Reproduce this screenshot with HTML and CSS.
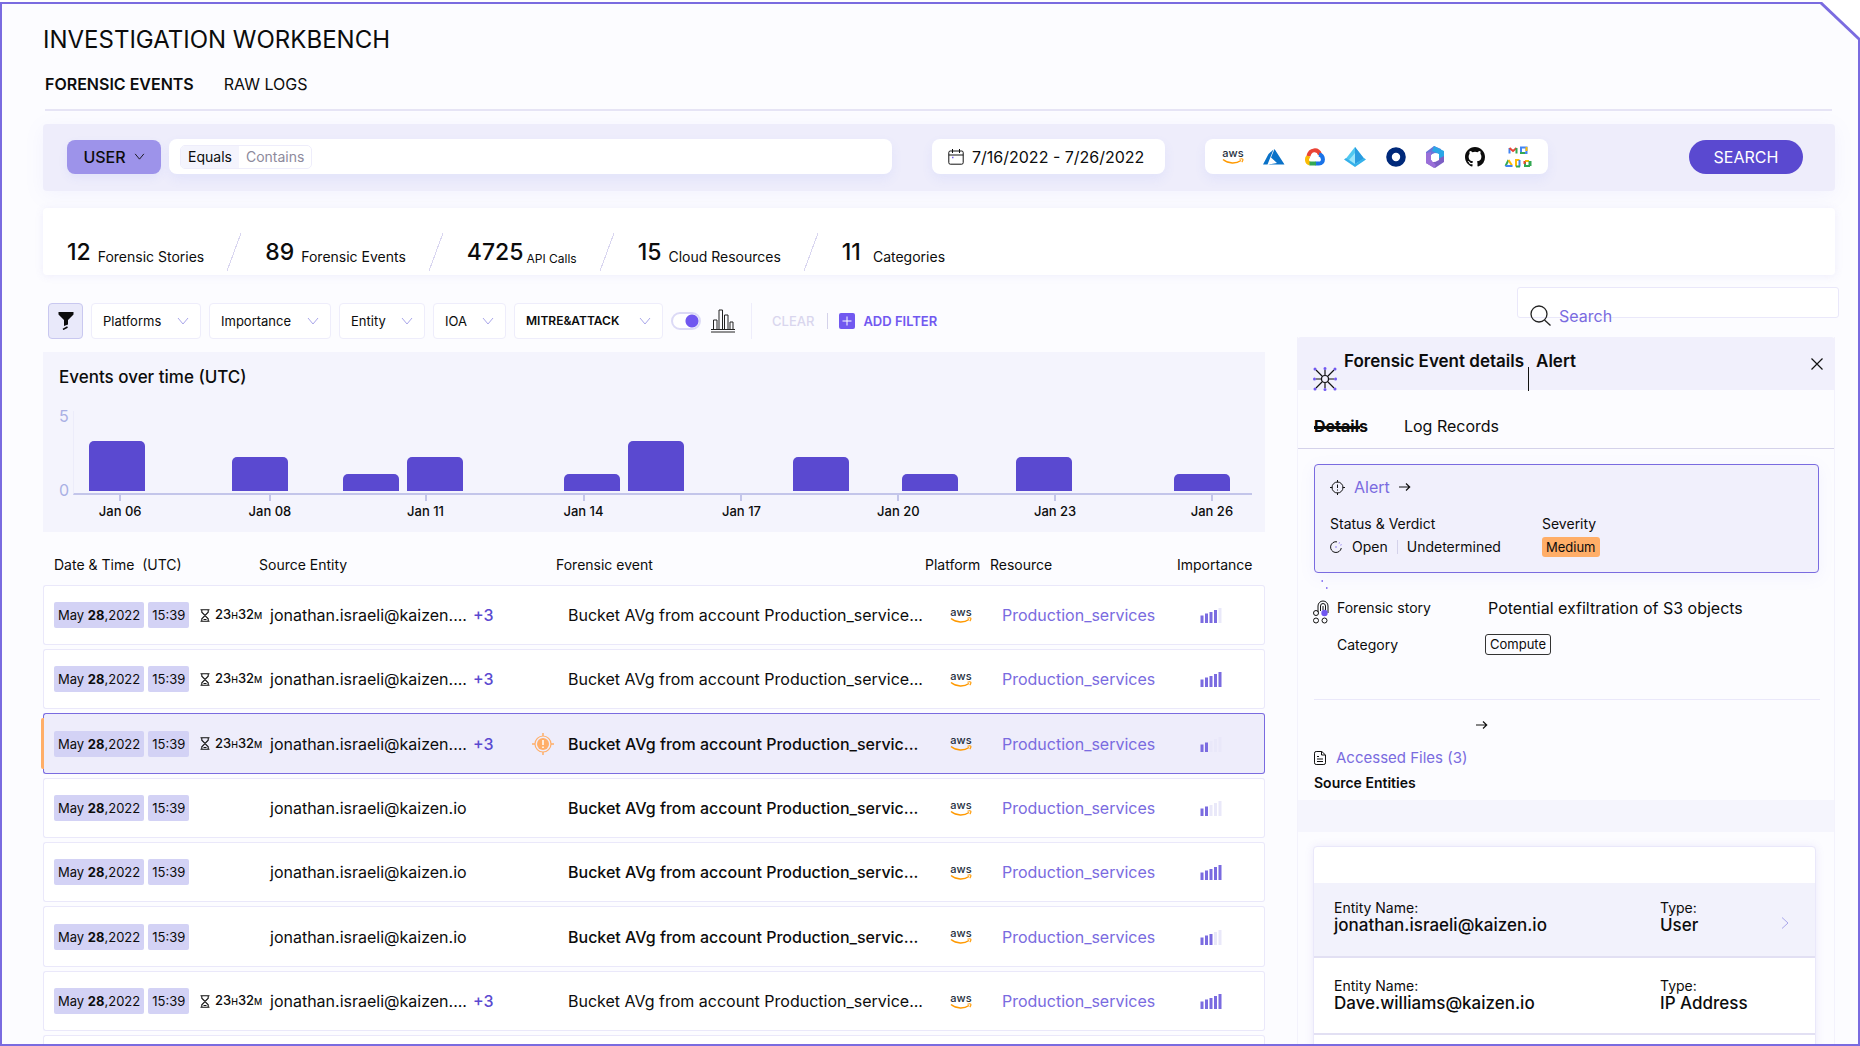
FILE: index.html
```html
<!DOCTYPE html>
<html lang="en">
<head>
    <meta charset="UTF-8">
    <meta name="viewport" content="width=device-width, initial-scale=1.0">
    <title>Investigation Workbench</title>
    <link rel="stylesheet" href="styles.css">
</head>
<body>
    <!-- shared icons -->
    <svg class="sprite" aria-hidden="true">
        <symbol id="chevron" viewBox="0 0 12 8"><path d="M1 1l5 6 5-6" fill="none" stroke="currentColor"/></symbol>
        <symbol id="aws" viewBox="0 0 22 17">
            <text x="11" y="9" text-anchor="middle" font-size="11" font-weight="500" fill="#252f3e">aws</text>
            <path d="M1 11.5c5.500 4.500 13 4.500 18 1" fill="none" stroke="#f90" stroke-width="1.500"/>
            <path d="M17.500 11.200c1.500-.500 3-.400 3.300 0 .300.500-.200 2-1 3" fill="none" stroke="#f90" stroke-width="1.100"/>
        </symbol>
        <symbol id="hourglass" viewBox="0 0 10 13"><path d="M.5.7h9M.5 12.300h9M1.800.7v2.500L5 6.500l3.200-3.300V.7M1.800 12.300V9.800L5 6.500l3.200 3.300v2.500M3.500 10.500h3" fill="none" stroke="#111" stroke-width="1.100"/></symbol>
        <symbol id="arrow" viewBox="0 0 12 10"><path d="M0 5h10.500M7 1.500L10.700 5 7 8.500" fill="none" stroke="#111" stroke-width="1.200"/></symbol>
        <symbol id="sig2" viewBox="0 0 22 18"><path d="M2 17V9.500M6.500 17V7.500" class="sig-on"/><path d="M11 17V6M15.500 17V4M20 17V2" class="sig-off"/></symbol>
        <symbol id="sig3" viewBox="0 0 22 18"><path d="M2 17V9.500M6.500 17V7.500M11 17V6" class="sig-on"/><path d="M15.500 17V4M20 17V2" class="sig-off"/></symbol>
        <symbol id="sig4" viewBox="0 0 22 18"><path d="M2 17V9.500M6.500 17V7.500M11 17V6M15.500 17V4" class="sig-on"/><path d="M20 17V2" class="sig-off"/></symbol>
        <symbol id="sig5" viewBox="0 0 22 18"><path d="M2 17V9.500M6.500 17V7.500M11 17V6M15.500 17V4M20 17V2" class="sig-on"/></symbol>
    </svg>

    <div class="frame">
        <main class="workbench">
            <h1>INVESTIGATION WORKBENCH</h1>
            <nav class="main-tabs">
                <a href="#" class="active">FORENSIC EVENTS</a>
                <a href="#">RAW LOGS</a>
            </nav>

            <form class="query-bar">
                <button type="button" class="user-btn">USER <svg width="11" height="7"><use href="#chevron"/></svg></button>
                <div class="query">
                    <div class="segment">
                        <button type="button" class="on">Equals</button>
                        <button type="button">Contains</button>
                    </div>
                    <input type="text" aria-label="User query">
                </div>
                <button type="button" class="date-range">
                    <svg width="16" height="16" viewBox="0 0 16 16" fill="none" stroke="#111"><rect x=".8" y="2" width="14.400" height="13.200" rx="1.500"/><path d="M.8 6h14.400M4.500 0v4M11.500 0v4"/><path d="M4 8.500h1.500" stroke="#7158f0" stroke-width="1.500"/></svg>
                    7/16/2022 - 7/26/2022
                </button>
                <div class="platforms">
                    <svg width="22" height="17"><use href="#aws"/></svg>
                    <svg width="22" height="18" viewBox="0 0 22 18"><path d="M10.500 1.500L5.500 6 0 16.500h4.500zM11.500 1L8 9.500l6 5.500-9 1.500h16.500z" fill="#0a72c8"/></svg>
                    <svg width="20" height="18" viewBox="0 0 20 18" fill="none" stroke-width="4"><path d="M5 15.500a3.800 3.800 0 0 1-.500-7.300" stroke="#fbbc05"/><path d="M3.500 8C5 1 13 .500 15 6.500" stroke="#ea4335"/><path d="M14 6.500c5 1 5.500 9 0 9h-3.500" stroke="#1a73e8"/><path d="M4.500 15.500h6.500" stroke="#34a853"/></svg>
                    <svg width="22" height="20" viewBox="0 0 22 20"><path d="M11 0l9 11.500L11 17 2 11.500z" fill="#50c8f0"/><path d="M11 0v17l9-5.500z" fill="#2a9be0"/><path d="M11 6v11l-6-4z" fill="#9be6fb"/><path d="M0 12.500l2-1.500 9 6 9-6 2 1.500L11 20z" fill="#35b1ea"/></svg>
                    <svg width="20" height="20" viewBox="0 0 20 20"><circle cx="10" cy="10" r="7" fill="none" stroke="#00297a" stroke-width="5.600"/></svg>
                    <svg width="20" height="22" viewBox="0 0 20 22"><path d="M9 0l7 3v7l-3-3-6 1v8l-6 1V6z" fill="#6c74d8"/><path d="M9 0l10 5v7l-5 2V8L7 5z" fill="#2ba6e6"/><path d="M19 10v6l-9 6-9-5 8-1 4-3z" fill="#7c5fc4"/><path d="M1 7l5-1v8l5 5-2 3-8-5z" fill="#9a6fd8"/><path d="M10 7l4 2v5l-4 2-4-2V9z" fill="#fff"/></svg>
                    <svg width="20" height="20" viewBox="0 0 16 16"><path d="M8 0C3.580 0 0 3.580 0 8c0 3.540 2.290 6.530 5.470 7.590.4.070.55-.17.55-.38 0-.19-.01-.82-.01-1.490-2.010.37-2.530-.49-2.690-.94-.09-.23-.48-.94-.82-1.130-.28-.15-.68-.52-.01-.53.63-.01 1.080.58 1.230.82.72 1.210 1.870.87 2.330.66.07-.52.28-.87.51-1.070-1.780-.2-3.640-.89-3.640-3.950 0-.87.31-1.590.82-2.150-.08-.2-.36-1.020.08-2.120 0 0 .67-.21 2.200.82a7.600 7.600 0 0 1 4 0c1.530-1.040 2.200-.82 2.200-.82.44 1.100.16 1.920.08 2.120.51.56.82 1.270.82 2.150 0 3.070-1.870 3.750-3.650 3.950.29.25.54.73.54 1.480 0 1.070-.01 1.930-.01 2.200 0 .21.15.46.55.38A8 8 0 0 0 16 8c0-4.420-3.580-8-8-8z" fill="#0c0c0c"/></svg>
                    <svg width="28" height="22" viewBox="0 0 28 22" fill="none" stroke-width="2">
                        <path d="M5.500 7.500V2" stroke="#4285f4"/><path d="M5.500 2l3.500 3 3.500-3" stroke="#ea4335"/><path d="M12.500 2v5.500" stroke="#34a853"/>
                        <rect x="17" y="1.500" width="5.500" height="5.500" stroke="#4285f4"/><path d="M16 7h5" stroke="#34a853"/><path d="M22.500 1v4" stroke="#fbbc05"/>
                        <path d="M4.500 14L1.500 20" stroke="#34a853"/><path d="M4.500 14l3.500 5.500" stroke="#fbbc05"/><path d="M1.500 20h7" stroke="#4285f4"/>
                        <path d="M12 20.500V14h3.500" stroke="#fbbc05"/><path d="M15.500 14v6.500" stroke="#4285f4"/><path d="M12 20.500h4" stroke="#34a853"/>
                        <path d="M21 15v5h5" stroke="#34a853"/><path d="M21 15h4" stroke="#fbbc05"/><path d="M20.500 15v3" stroke="#ea4335"/><path d="M26 15v5" stroke="#34a853" stroke-width="3"/>
                    </svg>
                </div>
                <button type="submit" class="search-btn">SEARCH</button>
            </form>

            <section class="stats">
                <div class="stat"><b>12</b><span>Forensic Stories</span></div>
                <i class="slash"></i>
                <div class="stat"><b>89</b><span>Forensic Events</span></div>
                <i class="slash"></i>
                <div class="stat low"><b>4725</b><span>API Calls</span></div>
                <i class="slash"></i>
                <div class="stat"><b>15</b><span>Cloud Resources</span></div>
                <i class="slash"></i>
                <div class="stat wide"><b>11</b><span>Categories</span></div>
            </section>

            <div class="columns">
                <section class="events">
                    <div class="filters">
                        <button type="button" class="filter-btn" aria-label="Filters"><svg width="16" height="18" viewBox="0 0 16 18"><path d="M.5 0h15v2.500L10 8v4.500L6 14V8L.5 2.500z" fill="#0c0c0c"/><path d="M5 17.500l4.500-2.500" stroke="#0c0c0c" stroke-width="1.500"/></svg></button>
                        <label class="pick"><select aria-label="Platforms"><option>Platforms</option></select><svg width="12" height="8"><use href="#chevron"/></svg></label>
                        <label class="pick"><select aria-label="Importance"><option>Importance</option></select><svg width="12" height="8"><use href="#chevron"/></svg></label>
                        <label class="pick"><select aria-label="Entity"><option>Entity</option></select><svg width="12" height="8"><use href="#chevron"/></svg></label>
                        <label class="pick"><select aria-label="IOA"><option>IOA</option></select><svg width="12" height="8"><use href="#chevron"/></svg></label>
                        <label class="pick strong"><select aria-label="MITRE and ATTACK"><option>MITRE&amp;ATTACK</option></select><svg width="12" height="8"><use href="#chevron"/></svg></label>
                        <input type="checkbox" class="toggle" aria-label="Show chart" checked>
                        <svg class="chart-icon" width="24" height="24" viewBox="0 0 24 24" fill="none" stroke="#222"><path d="M2.500 20v-9h3.500v9M8 20V1h3.500v19M13.500 20V6H17v14M19 20v-7h3v7M0 20.500h24M0 23h24"/></svg>
                        <span class="rule tall"></span>
                        <button type="button" class="clear">CLEAR</button>
                        <span class="rule"></span>
                        <button type="button" class="add"><svg width="16" height="16" viewBox="0 0 16 16"><rect width="16" height="16" rx="2" fill="#7158f0"/><path d="M8 3.500v9M3.500 8h9" stroke="#fff"/></svg>ADD FILTER</button>
                    </div>

                    <div class="chart">
                        <h2>Events over time (UTC)</h2>
                        <div class="chart-grid">
                            <div class="y-axis"><span>5</span><span>0</span></div>
                            <div class="plot">
                                <div class="bar" style="--x:1.3%;--v:3"></div>
                                <div class="bar" style="--x:13.4%;--v:2"></div>
                                <div class="bar" style="--x:22.8%;--v:1"></div>
                                <div class="bar" style="--x:28.3%;--v:2"></div>
                                <div class="bar" style="--x:41.6%;--v:1"></div>
                                <div class="bar" style="--x:47%;--v:3"></div>
                                <div class="bar" style="--x:61%;--v:2"></div>
                                <div class="bar" style="--x:70.3%;--v:1"></div>
                                <div class="bar" style="--x:80%;--v:2"></div>
                                <div class="bar" style="--x:93.4%;--v:1"></div>
                            </div>
                            <div class="x-axis">
                                <span style="--x:4%">Jan 06</span>
                                <span style="--x:16.7%">Jan 08</span>
                                <span style="--x:29.9%">Jan 11</span>
                                <span style="--x:43.3%">Jan 14</span>
                                <span style="--x:56.7%">Jan 17</span>
                                <span style="--x:70%">Jan 20</span>
                                <span style="--x:83.3%">Jan 23</span>
                                <span style="--x:96.6%">Jan 26</span>
                            </div>
                        </div>
                    </div>

                    <table>
                        <colgroup><col class="c-date"><col class="c-source"><col><col class="c-platform"><col class="c-resource"><col class="c-level"></colgroup>
                        <thead>
                            <tr><th>Date &amp; Time &nbsp;(UTC)</th><th>Source Entity</th><th>Forensic event</th><th>Platform</th><th>Resource</th><th>Importance</th></tr>
                        </thead>
                        <tbody>
                            <tr>
                                <td><div class="cell"><span class="chip">May <b>28</b>,2022</span><span class="chip">15:39</span></div></td>
                                <td><div class="cell"><span class="dur"><svg width="10" height="13"><use href="#hourglass"/></svg>23<small>H</small>32<small>M</small></span><span>jonathan.israeli@kaizen....</span><a href="#" class="more">+3</a></div></td>
                                <td><div class="cell"><span class="mark"></span><span>Bucket AVg from account Production_service...</span></div></td>
                                <td><svg width="22" height="17"><use href="#aws"/></svg></td>
                                <td><a href="#">Production_services</a></td>
                                <td><svg width="22" height="18"><use href="#sig4"/></svg></td>
                            </tr>
                            <tr>
                                <td><div class="cell"><span class="chip">May <b>28</b>,2022</span><span class="chip">15:39</span></div></td>
                                <td><div class="cell"><span class="dur"><svg width="10" height="13"><use href="#hourglass"/></svg>23<small>H</small>32<small>M</small></span><span>jonathan.israeli@kaizen....</span><a href="#" class="more">+3</a></div></td>
                                <td><div class="cell"><span class="mark"></span><span>Bucket AVg from account Production_service...</span></div></td>
                                <td><svg width="22" height="17"><use href="#aws"/></svg></td>
                                <td><a href="#">Production_services</a></td>
                                <td><svg width="22" height="18"><use href="#sig5"/></svg></td>
                            </tr>
                            <tr class="selected unread">
                                <td><div class="cell"><span class="chip">May <b>28</b>,2022</span><span class="chip">15:39</span></div></td>
                                <td><div class="cell"><span class="dur"><svg width="10" height="13"><use href="#hourglass"/></svg>23<small>H</small>32<small>M</small></span><span>jonathan.israeli@kaizen....</span><a href="#" class="more">+3</a></div></td>
                                <td><div class="cell"><span class="mark"><svg width="22" height="22" viewBox="0 0 22 22" fill="none" stroke="#ffae68"><circle cx="11" cy="11" r="8" stroke-width="1.200"/><circle cx="11" cy="11" r="6" fill="#ffae68" stroke="none"/><path d="M11 0v3M11 19v3M0 11h3M19 11h3" stroke-width="1.500"/><path d="M11 7v5M11 13.500v1.500" stroke="#fff" stroke-width="1.500"/></svg></span><span>Bucket AVg from account Production_servic...</span></div></td>
                                <td><svg width="22" height="17"><use href="#aws"/></svg></td>
                                <td><a href="#">Production_services</a></td>
                                <td><svg width="22" height="18"><use href="#sig2"/></svg></td>
                            </tr>
                            <tr class="unread">
                                <td><div class="cell"><span class="chip">May <b>28</b>,2022</span><span class="chip">15:39</span></div></td>
                                <td><div class="cell"><span class="dur"></span><span>jonathan.israeli@kaizen.io</span></div></td>
                                <td><div class="cell"><span class="mark"></span><span>Bucket AVg from account Production_servic...</span></div></td>
                                <td><svg width="22" height="17"><use href="#aws"/></svg></td>
                                <td><a href="#">Production_services</a></td>
                                <td><svg width="22" height="18"><use href="#sig2"/></svg></td>
                            </tr>
                            <tr class="unread">
                                <td><div class="cell"><span class="chip">May <b>28</b>,2022</span><span class="chip">15:39</span></div></td>
                                <td><div class="cell"><span class="dur"></span><span>jonathan.israeli@kaizen.io</span></div></td>
                                <td><div class="cell"><span class="mark"></span><span>Bucket AVg from account Production_servic...</span></div></td>
                                <td><svg width="22" height="17"><use href="#aws"/></svg></td>
                                <td><a href="#">Production_services</a></td>
                                <td><svg width="22" height="18"><use href="#sig5"/></svg></td>
                            </tr>
                            <tr class="unread">
                                <td><div class="cell"><span class="chip">May <b>28</b>,2022</span><span class="chip">15:39</span></div></td>
                                <td><div class="cell"><span class="dur"></span><span>jonathan.israeli@kaizen.io</span></div></td>
                                <td><div class="cell"><span class="mark"></span><span>Bucket AVg from account Production_servic...</span></div></td>
                                <td><svg width="22" height="17"><use href="#aws"/></svg></td>
                                <td><a href="#">Production_services</a></td>
                                <td><svg width="22" height="18"><use href="#sig3"/></svg></td>
                            </tr>
                            <tr>
                                <td><div class="cell"><span class="chip">May <b>28</b>,2022</span><span class="chip">15:39</span></div></td>
                                <td><div class="cell"><span class="dur"><svg width="10" height="13"><use href="#hourglass"/></svg>23<small>H</small>32<small>M</small></span><span>jonathan.israeli@kaizen....</span><a href="#" class="more">+3</a></div></td>
                                <td><div class="cell"><span class="mark"></span><span>Bucket AVg from account Production_service...</span></div></td>
                                <td><svg width="22" height="17"><use href="#aws"/></svg></td>
                                <td><a href="#">Production_services</a></td>
                                <td><svg width="22" height="18"><use href="#sig5"/></svg></td>
                            </tr>
                            <tr><td></td><td></td><td></td><td></td><td></td><td></td></tr>
                        </tbody>
                    </table>
                </section>

                <aside class="side">
                    <label class="find">
                        <svg width="21" height="21" viewBox="0 0 21 21" fill="none" stroke="#222" stroke-width="1.300"><circle cx="9" cy="9" r="8"/><path d="M14.500 15l6 5.500"/></svg>
                        <input type="search" placeholder="Search" aria-label="Search">
                    </label>

                    <div class="panel">
                        <header class="panel-head">
                            <svg width="24" height="24" viewBox="0 0 24 24"><path d="M12 3v5M12 16v5M3 12h5M16 12h5M3 3l6 6M15 15l6 6M21 3l-6 6M9 15l-6 6" stroke="#111" stroke-width="1.200"/><circle cx="12" cy="12" r="3.500" fill="none" stroke="#111" stroke-width="1.200"/><path d="M12 1.500h.01M12 22.500h.01M1.500 12h.01M22.500 12h.01M2 2h.01M22 2h.01M2 22h.01M22 22h.01" stroke="#7158f0" stroke-width="3" stroke-linecap="round"/></svg>
                            <h2>Forensic Event details</h2>
                            <span class="sep"></span>
                            <h2>Alert</h2>
                            <button type="button" class="close" aria-label="Close"><svg width="12" height="12" viewBox="0 0 12 12"><path d="M.5.5l11 11M11.500.5l-11 11" stroke="#111" stroke-width="1.200"/></svg></button>
                        </header>
                        <nav class="panel-tabs">
                            <a href="#" class="active">Details</a>
                            <a href="#">Log Records</a>
                        </nav>

                        <section class="alert-card">
                            <div class="alert-title">
                                <svg width="15" height="15" viewBox="0 0 15 15" fill="none" stroke="#111"><circle cx="7.500" cy="7.500" r="5.500"/><path d="M7.500 0v2.500M7.500 12.500V15M0 7.500h2.500M12.500 7.500H15M7.500 4.500V8M7.500 9.500v1"/></svg>
                                <a href="#">Alert</a>
                                <svg width="12" height="10"><use href="#arrow"/></svg>
                            </div>
                            <div class="alert-facts">
                                <div>
                                    <div class="fact-label">Status &amp; Verdict</div>
                                    <div class="status">
                                        <svg width="12" height="12" viewBox="0 0 12 12" fill="none" stroke="#111"><path d="M7 .8A5.400 5.400 0 1 0 11.300 7"/><path d="M9 1.700l.5.5M10.800 3.600l.3.600M5.500 6h1" stroke="#7158f0" stroke-width="1.300"/></svg>
                                        <span>Open</span><i></i><span>Undetermined</span>
                                    </div>
                                </div>
                                <div>
                                    <div class="fact-label">Severity</div>
                                    <span class="severity">Medium</span>
                                </div>
                            </div>
                        </section>

                        <div class="story">
                            <svg width="16" height="44" viewBox="0 0 16 44" fill="none" stroke="#111"><path d="M8.500 1h1.500M13 8h1.500" stroke="#7158f0" stroke-width="1.500"/><path d="M5 32v-6a4.500 4.500 0 0 1 10 0v7M7.500 31v-5a2 2 0 0 1 5 0v6M10 30v-4"/><circle cx="3" cy="33" r="2.500"/><circle cx="3" cy="40.500" r="2.500"/><circle cx="11.500" cy="40.500" r="2.500"/><circle cx="11.500" cy="33" r="3.200" fill="#7158f0" stroke="none"/></svg>
                            <span class="key">Forensic story</span>
                            <span>Potential exfiltration of S3 objects</span>
                        </div>
                        <div class="category">
                            <span class="key">Category</span>
                            <span class="tag">Compute</span>
                        </div>

                        <div class="files">
                            <svg class="files-arrow" width="12" height="16"><use href="#arrow"/></svg>
                            <div class="files-link">
                                <svg width="12" height="14" viewBox="0 0 12 14" fill="none" stroke="#111"><path d="M.5 2.200A1.700 1.700 0 0 1 2.200.5h5.600l3.700 3.500v7.800a1.700 1.700 0 0 1-1.700 1.700H2.200a1.700 1.700 0 0 1-1.700-1.700zM7.500.5V4h4M3 5.500h2M3 8h6M3 10.500h6"/></svg>
                                <a href="#">Accessed Files (3)</a>
                            </div>
                        </div>
                        <h3>Source Entities</h3>
                        <div class="band"></div>

                        <div class="entities">
                            <div class="entity current">
                                <div><span>Entity Name:</span><b>jonathan.israeli@kaizen.io</b></div>
                                <div><span>Type:</span><b>User</b></div>
                                <svg width="8" height="12" viewBox="0 0 8 12"><path d="M1 .5L7 6l-6 5.500" fill="none" stroke="#a9a6ea"/></svg>
                            </div>
                            <div class="entity">
                                <div><span>Entity Name:</span><b>Dave.williams@kaizen.io</b></div>
                                <div><span>Type:</span><b>IP Address</b></div>
                            </div>
                            <div class="entity"></div>
                        </div>
                    </div>
                </aside>
            </div>
        </main>
    </div>
</body>
</html>
```
FILE: styles.css
```css
* {
    box-sizing: border-box;
}

body {
    margin: 0;
    background: #fff;
    color: #0c0c0c;
    font: 16px/20px Inter, "Liberation Sans", sans-serif;
}

h1, h2, h3 {
    margin: 0;
}

a {
    color: #7a6be0;
    text-decoration: none;
}

button, input, select {
    font: inherit;
    color: inherit;
}

button {
    border: none;
    background: none;
    padding: 0;
    cursor: pointer;
}

svg {
    flex: none;
}

.sprite {
    display: none;
}

.sig-on, .sig-off {
    stroke-width: 3;
    stroke: #7a6be0;
}

.sig-off {
    stroke: #e9e8f9;
}

/* purple outline with the top right corner cut off */
.frame {
    height: 100vh;
    padding: 2px;
    border-top: 2px solid #fff;
    background: #7a6be0 padding-box;
    clip-path: polygon(0 0, calc(100% - 40px) 0, 100% 38px, 100% 100%, 0 100%);
}

.workbench {
    height: 100%;
    padding: 21px 23px 0 41px;
    overflow: hidden;
    background: #fcfcff;
    clip-path: polygon(0 0, calc(100% - 38px) 0, 100% 36px, 100% 100%, 0 100%);
}

h1 {
    font-size: 24px;
    font-weight: 400;
    line-height: 30px;
}

.main-tabs {
    display: flex;
    gap: 30px;
    margin: 19px 3px 0 2px;
    padding-bottom: 15px;
    border-bottom: 2px solid #e6e4f5;
}

.main-tabs a {
    color: #0c0c0c;
}

.main-tabs .active {
    font-weight: 600;
}

/* query bar */
.query-bar {
    display: flex;
    align-items: center;
    height: 67px;
    margin-top: 13px;
    padding: 0 32px 2px 24px;
    border-radius: 4px;
    background: #eeedfb;
    box-shadow: 0 4px 20px rgba(122, 130, 240, 0.08);
}

.user-btn {
    display: flex;
    align-items: center;
    justify-content: center;
    gap: 8px;
    width: 94px;
    height: 34px;
    margin-right: 8px;
    border-radius: 8px;
    background: #9d93ea;
    font-weight: 500;
    box-shadow: 0 4px 10px rgba(90, 110, 240, 0.08);
}

.query, .date-range, .platforms {
    display: flex;
    align-items: center;
    height: 35px;
    border-radius: 8px;
    background: #fff;
    box-shadow: 0 5px 12px rgba(90, 120, 240, 0.08);
}

.query {
    flex: 1;
    min-width: 0;
    padding: 0 11px;
}

.query input {
    flex: 1;
    min-width: 0;
    border: none;
    outline: none;
    background: none;
}

.segment {
    display: flex;
    height: 24px;
    border: 1px solid #eeedfb;
    border-radius: 5px;
    overflow: hidden;
    font-size: 14px;
}

.segment button {
    padding: 0 7px;
    color: #8d8a9c;
}

.segment .on {
    background: #f4f4fd;
    color: #0c0c0c;
}

.date-range {
    gap: 8px;
    width: 233px;
    margin: 0 40px;
    padding: 0 16px;
    white-space: nowrap;
}

.platforms {
    justify-content: space-between;
    width: 343px;
    margin-right: 141px;
    padding: 0 16px 0 17px;
}

.search-btn {
    width: 114px;
    height: 34px;
    border-radius: 17px;
    background: #5a49d0;
    color: #fff;
}

/* totals */
.stats {
    display: flex;
    align-items: flex-end;
    height: 67px;
    margin-top: 17px;
    padding: 0 24px 4px;
    border-radius: 4px;
    background: #fff;
    box-shadow: 0 1px 8px rgba(120, 110, 220, 0.1);
}

.stat {
    display: flex;
    align-items: flex-end;
    gap: 7px;
}

.stat b {
    font-size: 23px;
    font-weight: 500;
    line-height: 38px;
}

.stat span {
    font-size: 14px;
    line-height: 28px;
}

.stat.low {
    gap: 3px;
}

.stat.low span {
    font-size: 12px;
    line-height: 24px;
}

.stat.wide {
    gap: 12px;
}

.slash {
    width: 14px;
    height: 38px;
    margin: 0 24px 0 23px;
    background: linear-gradient(to bottom right, transparent 48%, #d9d6f0 48%, #d9d6f0 52%, transparent 52%);
}

.columns {
    display: grid;
    grid-template-columns: minmax(0, 1fr) 538px;
    gap: 32px;
}

/* filters */
.filters {
    display: flex;
    align-items: center;
    gap: 8px;
    height: 36px;
    margin: 28px 0 13px 5px;
    font-size: 13px;
}

.filter-btn {
    display: flex;
    align-items: center;
    justify-content: center;
    width: 35px;
    height: 36px;
    border: 1px solid #c9c8f0;
    border-radius: 4px;
    background: #e9e9fa;
}

.pick {
    position: relative;
}

.pick select {
    height: 36px;
    padding: 0 38px 0 11px;
    border: 1px solid #eeedfb;
    border-radius: 4px;
    background: #fff;
    appearance: none;
}

.pick svg {
    position: absolute;
    top: 14px;
    right: 12px;
    color: #a9a6ea;
    pointer-events: none;
}

.pick.strong {
    font-size: 12px;
    font-weight: 600;
}

.pick.strong select {
    padding-right: 42px;
}

.toggle {
    width: 30px;
    height: 18px;
    margin: 0;
    border: 2px solid #dcdaf6;
    border-radius: 9px;
    background: radial-gradient(circle at 19px 7px, #7158f0 6px, #fff 7px);
    appearance: none;
}

.chart-icon {
    margin-left: 2px;
}

.rule {
    width: 1px;
    height: 16px;
    background: #d4d2ea;
}

.rule.tall {
    height: 36px;
    margin: 0 12px 0 8px;
    background: #eeedfb;
}

.clear {
    margin-right: 5px;
    color: #d9d6ee;
    font-weight: 500;
}

.add {
    display: flex;
    align-items: center;
    gap: 8px;
    margin-left: 3px;
    color: #7158f0;
    font-weight: 600;
}

/* bar chart */
.chart {
    padding: 15px 13px 13px 16px;
    background: #f4f4fd;
}

.chart h2 {
    margin-bottom: 24px;
    font-size: 17px;
    font-weight: 500;
}

.chart-grid {
    display: grid;
    grid-template-columns: 14px 1fr;
    grid-template-rows: 84px auto;
}

.y-axis {
    display: flex;
    flex-direction: column;
    justify-content: space-between;
    color: #a9b0e4;
    line-height: 10px;
}

.plot, .x-axis {
    display: grid;
}

.plot {
    padding-bottom: 2px;
    border-left: 1px solid #ececfa;
    border-bottom: 2px solid #c3c5ea;
}

.bar {
    grid-area: 1 / 1;
    align-self: end;
    width: 56px;
    height: calc(var(--v) * 21%);
    margin-left: var(--x);
    border-radius: 5px 5px 0 0;
    background: #5a49d0;
}

.x-axis {
    grid-column: 2;
    font-size: 13px;
    font-weight: 500;
    line-height: 16px;
}

.x-axis span {
    grid-area: 1 / 1;
    width: 60px;
    margin-left: calc(var(--x) - 30px);
    text-align: center;
}

.x-axis span::before {
    content: '';
    display: block;
    width: 2px;
    height: 6px;
    margin: 0 auto 2px;
    background: #c3c5ea;
}

/* events table */
table {
    width: 100%;
    margin-top: 9px;
    border-spacing: 0 4px;
    table-layout: fixed;
}

.c-date {
    width: 157px;
}

.c-source {
    width: 319px;
}

.c-platform {
    width: 65px;
}

.c-resource {
    width: 175px;
}

.c-level {
    width: 100px;
}

th {
    height: 36px;
    padding: 4px 0 0;
    font-size: 14px;
    font-weight: 400;
    text-align: left;
    white-space: nowrap;
}

th:nth-child(1) {
    padding-left: 11px;
}

th:nth-child(2) {
    padding-left: 59px;
}

th:nth-child(3) {
    padding-left: 37px;
}

th:nth-child(6) {
    padding-left: 12px;
}

td {
    position: relative;
    height: 60px;
    padding: 0;
    border: solid #eae8fa;
    border-width: 1px 0;
    background: #fff;
    white-space: nowrap;
}

tr:nth-child(3n) td {
    height: 61px;
}

td:first-child {
    padding-left: 10px;
    border-left-width: 1px;
    border-radius: 3px 0 0 3px;
}

td:nth-child(3) {
    padding-left: 13px;
}

td:nth-child(4) {
    padding-left: 25px;
}

td:nth-child(5) {
    padding-left: 12px;
}

td:last-child {
    padding-left: 35px;
    border-right-width: 1px;
    border-radius: 0 3px 3px 0;
}

td > svg {
    display: block;
}

.cell {
    display: flex;
    align-items: center;
}

.chip {
    margin-right: 4px;
    padding: 0 4px;
    border-radius: 2px;
    background: #d3d2f5;
    font-size: 13px;
    line-height: 26px;
}

.dur {
    display: flex;
    flex: none;
    align-items: baseline;
    width: 70px;
    font-size: 13px;
    font-weight: 500;
}

.dur svg {
    align-self: center;
    margin-right: 5px;
}

.dur small {
    font-size: 9px;
}

.more {
    margin-left: 6px;
    color: #5a49d0;
    font-weight: 500;
}

.mark {
    flex: none;
    width: 36px;
}

.mark svg {
    display: block;
}

.unread td:nth-child(3) {
    font-weight: 500;
}

.selected td {
    border-color: #7a6be0;
    background: #eeedfb;
}

.selected td:first-child::before {
    content: '';
    position: absolute;
    top: 4px;
    bottom: 4px;
    left: -3px;
    width: 3px;
    border-radius: 2px 0 0 2px;
    background: #ffae68;
}

/* side column */
.find {
    display: flex;
    align-items: flex-start;
    gap: 8px;
    width: 322px;
    height: 31px;
    margin: 12px -4px 19px auto;
    padding: 17px 12px 0;
    border: 1px solid #eae8fa;
    border-radius: 3px;
    background: #fff;
}

.find input {
    flex: 1;
    height: 22px;
    padding: 0;
    border: none;
    outline: none;
    background: none;
}

.find input::placeholder {
    color: #7a6be0;
}

.panel {
    border: solid #f3f2fc;
    border-width: 0 1px;
}

.panel-head {
    display: flex;
    align-items: flex-start;
    height: 53px;
    margin: 0 -1px;
    padding: 0 12px 0 16px;
    border-radius: 4px 4px 0 0;
    background: #f1f0fc;
}

.panel-head > svg, .sep {
    margin-top: 30px;
}

.panel-head h2 {
    margin: 14px 0 0 7px;
    font-size: 17px;
    font-weight: 600;
}

.sep {
    width: 1px;
    height: 24px;
    margin-left: 4px;
    background: #111;
}

.close {
    margin: 17px 0 0 auto;
}

.panel-tabs {
    display: flex;
    gap: 36px;
    padding: 26px 16px 12px;
    border-bottom: 1px solid #d4d2ea;
}

.panel-tabs a {
    position: relative;
    color: #0c0c0c;
}

.panel-tabs .active {
    font-weight: 700;
}

.panel-tabs .active::after {
    content: '';
    position: absolute;
    top: 10px;
    left: 0;
    right: 8px;
    height: 3px;
    background: #0c0c0c;
}

.alert-card {
    margin: 15px 15px 0 16px;
    padding: 12px 15px 15px;
    border: 1px solid #7a6be0;
    border-radius: 4px;
    background: #f1f0fc;
    box-shadow: 0 4px 16px rgba(122, 130, 240, 0.08);
}

.alert-title {
    display: flex;
    align-items: center;
    gap: 9px;
}

.alert-facts {
    display: grid;
    grid-template-columns: 212px 1fr;
    margin-top: 18px;
}

.fact-label {
    margin-bottom: 4px;
    font-size: 14px;
    line-height: 18px;
}

.status {
    display: flex;
    align-items: center;
    font-size: 14px;
}

.status svg {
    margin-right: 10px;
}

.status i {
    width: 1px;
    height: 14px;
    margin: 0 9px;
    background: #d4d2ea;
}

.severity {
    display: block;
    width: max-content;
    padding: 0 4px;
    border-radius: 3px;
    background: #ffae68;
    font-size: 13px;
}

.story, .category {
    display: flex;
    align-items: flex-start;
    margin: 7px 14px 0 15px;
}

.story span {
    margin-top: 18px;
}

.key {
    width: 151px;
    font-size: 14px;
}

.story .key {
    margin-left: 8px;
}

.category {
    align-items: center;
    margin-top: 10px;
    padding-left: 24px;
}

.category .key {
    width: 148px;
}

.tag {
    padding: 0 4px;
    border: 1px solid #333;
    border-radius: 3px;
    font-size: 13px;
    line-height: 19px;
}

.files {
    margin: 44px 14px 0 16px;
    padding-top: 17px;
    border-top: 1px solid #eae8fa;
}

.files-arrow {
    display: block;
    margin-left: 162px;
}

.files-link {
    display: flex;
    align-items: center;
    gap: 10px;
    margin-top: 15px;
    font-size: 15px;
}

h3 {
    margin: 6px 0 8px 16px;
    font-size: 14px;
    font-weight: 600;
    line-height: 18px;
}

.band {
    height: 32px;
    background: #f5f5fd;
}

.entities {
    margin: 14px 18px 0 15px;
    padding-top: 36px;
    border: 1px solid #eae8fa;
    border-radius: 4px;
    background: #fff;
    box-shadow: 0 0 8px rgba(120, 110, 220, 0.12);
}

.entity {
    display: grid;
    grid-template-columns: 326px 1fr auto;
    align-items: start;
    height: 77px;
    padding: 20px 26px 0 20px;
    border-bottom: 2px solid #e2e0f3;
}

.entity.current {
    height: 75px;
    padding-top: 17px;
    background: #f2f2fc;
}

.entity span, .entity b {
    display: block;
    font-size: 17px;
    font-weight: 500;
    line-height: 18px;
}

.entity span {
    font-size: 14px;
    font-weight: 400;
    line-height: 16px;
}

.entity svg {
    margin-top: 17px;
}
```
